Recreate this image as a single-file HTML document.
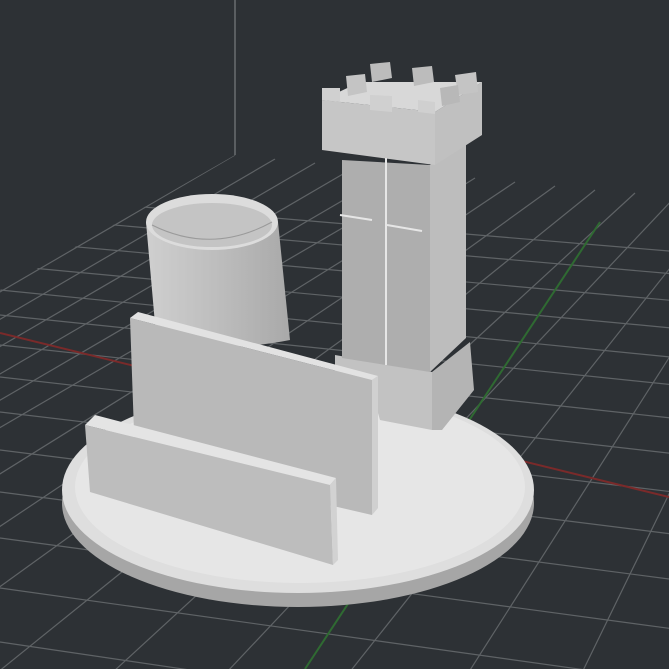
<!DOCTYPE html>
<html><head><style>html,body{margin:0;padding:0;background:#2d3135;overflow:hidden;width:669px;height:669px}svg{display:block}</style></head>
<body>
<svg width="669" height="669" viewBox="0 0 669 669" xmlns="http://www.w3.org/2000/svg">
<defs>
<clipPath id="g"><polygon points="235,155 669,195 669,669 0,669 0,290"/></clipPath>
<linearGradient id="cyl" x1="0" x2="1"><stop offset="0" stop-color="#cfcfcf"/><stop offset="0.5" stop-color="#bdbdbd"/><stop offset="1" stop-color="#a9a9a9"/></linearGradient>
</defs>
<rect width="669" height="669" fill="#2d3135"/>
<line x1="235" y1="0" x2="235" y2="155" stroke="#6a6d70" stroke-width="1.5"/>
<g clip-path="url(#g)" stroke="#5f6366" stroke-width="1.2">
<line x1="235" y1="155" x2="-700" y2="700"/>
<line x1="275" y1="159" x2="-660" y2="704"/>
<line x1="315" y1="163" x2="-620" y2="708"/>
<line x1="355" y1="167" x2="-580" y2="712"/>
<line x1="395" y1="170" x2="-540" y2="715"/>
<line x1="435" y1="174" x2="-500" y2="719"/>
<line x1="475" y1="178" x2="-400" y2="723"/>
<line x1="515" y1="182" x2="-300" y2="727"/>
<line x1="555" y1="186" x2="-200" y2="731"/>
<line x1="595" y1="190" x2="-80" y2="735"/>
<line x1="635" y1="193" x2="40" y2="739"/>
<line x1="675" y1="197" x2="160" y2="743"/>
<line x1="720" y1="205" x2="280" y2="760"/>
<line x1="760" y1="215" x2="400" y2="780"/>
<line x1="800" y1="225" x2="520" y2="800"/>
<line x1="0" y1="290" x2="800" y2="370"/>
<line x1="0" y1="265" x2="800" y2="340"/>
<line x1="0" y1="240" x2="800" y2="312"/>
<line x1="0" y1="215" x2="800" y2="285"/>
<line x1="0" y1="195" x2="800" y2="262"/>
<line x1="0" y1="315" x2="800" y2="398"/>
<line x1="0" y1="345" x2="800" y2="432"/>
<line x1="0" y1="377" x2="800" y2="468"/>
<line x1="0" y1="412" x2="800" y2="507"/>
<line x1="0" y1="450" x2="800" y2="550"/>
<line x1="0" y1="492" x2="800" y2="596"/>
<line x1="0" y1="538" x2="800" y2="646"/>
<line x1="0" y1="588" x2="800" y2="700"/>
<line x1="0" y1="642" x2="800" y2="760"/>
</g>
<line x1="0" y1="333" x2="669" y2="497" stroke="#7a2a2a" stroke-width="2"/>
<line x1="600" y1="222" x2="305" y2="669" stroke="#2f6a32" stroke-width="2"/>
<!-- base -->
<ellipse cx="298" cy="503" rx="236" ry="104" fill="#a6a6a6"/>
<ellipse cx="298" cy="490" rx="236" ry="103" fill="#dedede"/>
<ellipse cx="300" cy="487" rx="225" ry="96" fill="#e6e6e6"/>
<!-- cylinder -->
<path d="M146,222 L156,335 Q215,355 290,340 L278,222 Z" fill="url(#cyl)"/>
<ellipse cx="212" cy="222" rx="66" ry="28" fill="#dcdcdc"/>
<ellipse cx="212" cy="225" rx="60" ry="22" fill="#c4c4c4"/>
<path d="M152,225 Q212,255 272,222" fill="none" stroke="#9a9a9a" stroke-width="1"/>
<!-- tower plinth -->
<polygon points="335,355 432,372 432,430 380,420 372,392 335,382" fill="#c2c2c2"/>
<polygon points="432,372 470,342 474,390 442,430 432,430" fill="#b4b4b4"/>
<!-- shaft -->
<polygon points="342,160 430,165 430,372 342,358" fill="#aeaeae"/>
<polygon points="430,165 466,140 466,338 430,372" fill="#bdbdbd"/>
<!-- crown -->
<polygon points="322,100 435,112 435,165 322,150" fill="#c6c6c6"/>
<polygon points="435,112 482,82 482,135 435,165" fill="#c0c0c0"/>
<polygon points="322,100 360,82 482,82 435,112" fill="#d8d8d8"/>
<line x1="386" y1="158" x2="386" y2="365" stroke="#e6e6e6" stroke-width="2"/>
<line x1="340" y1="215" x2="372" y2="220" stroke="#e6e6e6" stroke-width="2"/>
<line x1="387" y1="225" x2="422" y2="231" stroke="#e6e6e6" stroke-width="2"/>
<!-- merlons back -->
<polygon points="370,64 390,62 392,78 372,82" fill="#bcbcbc"/>
<polygon points="412,68 432,66 434,82 414,86" fill="#bcbcbc"/>
<polygon points="346,76 365,74 367,92 348,96" fill="#c4c4c4"/>
<polygon points="455,75 476,72 478,92 458,95" fill="#c4c4c4"/>
<polygon points="440,88 458,85 460,102 442,106" fill="#b8b8b8"/>
<!-- merlons front -->
<polygon points="322,88 340,88 340,102 322,100" fill="#d0d0d0"/>
<polygon points="370,95 392,96 392,112 370,110" fill="#d0d0d0"/>
<polygon points="418,100 435,102 435,114 418,112" fill="#d0d0d0"/>
<!-- back plate -->
<polygon points="130,318 372,380 372,515 135,460" fill="#b9b9b9"/>
<polygon points="130,318 138,312 378,376 372,380" fill="#e2e2e2"/>
<polygon points="372,380 378,376 378,508 372,515" fill="#d0d0d0"/>
<!-- front plate -->
<polygon points="85,425 330,485 333,565 90,492" fill="#bdbdbd"/>
<polygon points="85,425 95,415 336,478 330,485" fill="#e4e4e4"/>
<polygon points="330,485 336,478 338,560 333,565" fill="#d2d2d2"/>
</svg>
</body></html>
